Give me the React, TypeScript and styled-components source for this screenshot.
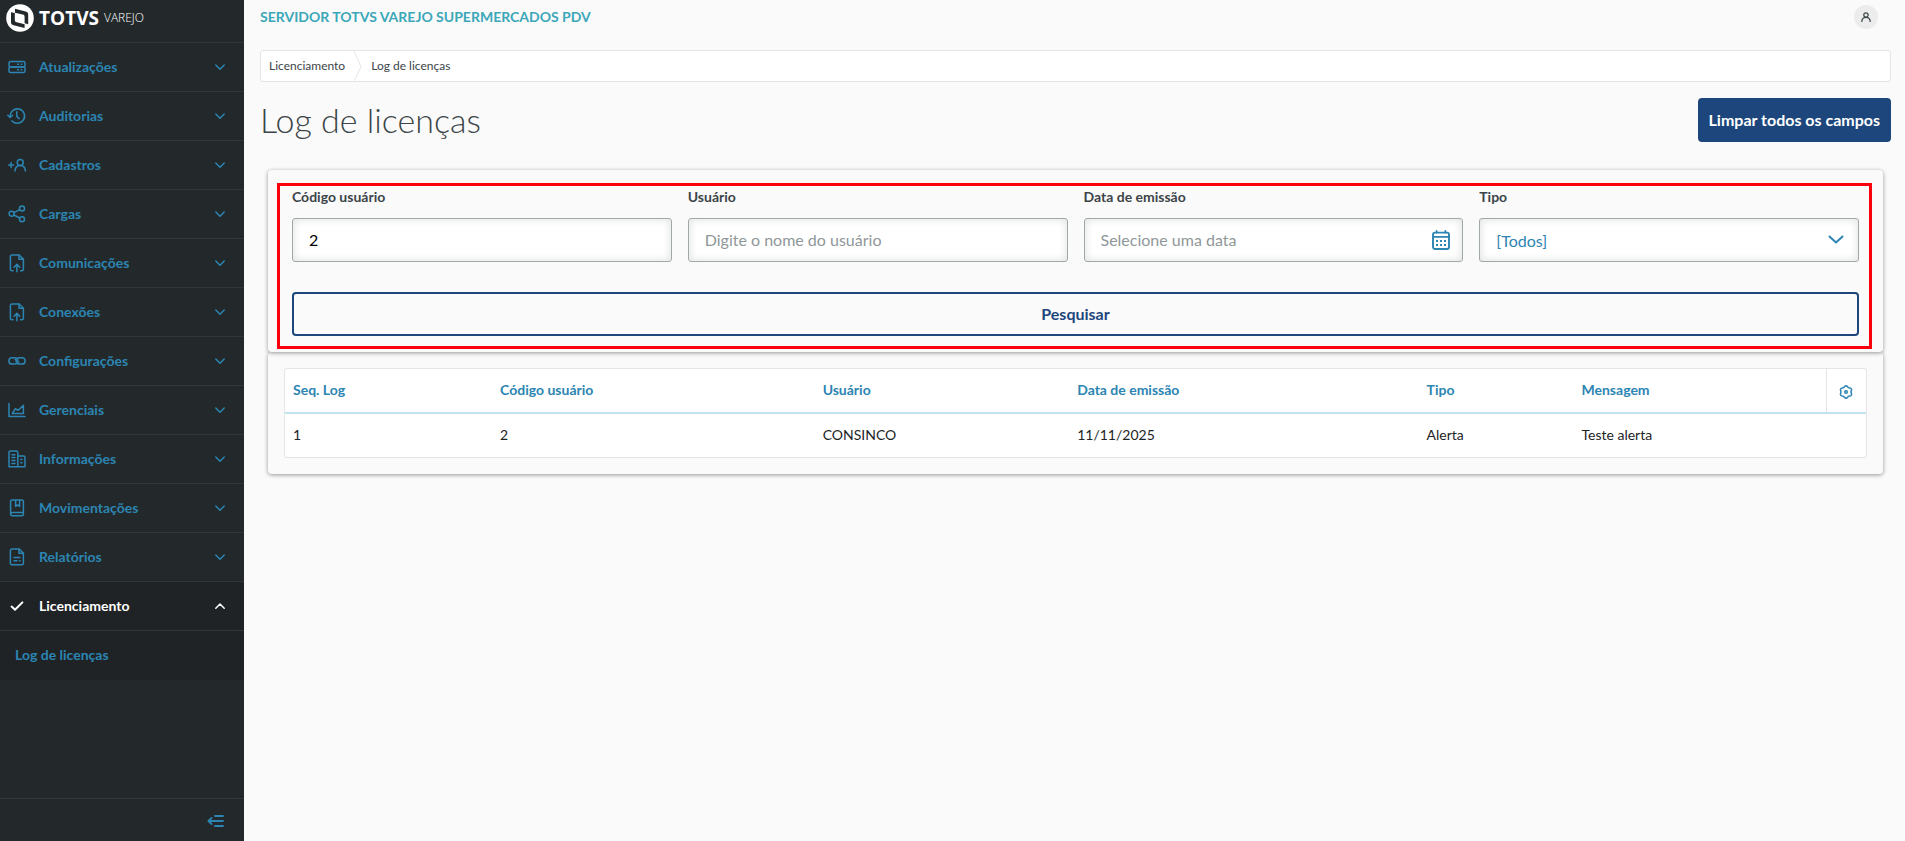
import React from 'react';
import styled, { createGlobalStyle } from 'styled-components';

const blue = '#2c85b2';
const navy = '#1c467c';
const line = '#e3e5e6';

const GlobalStyle = createGlobalStyle`
  *, *::before, *::after { box-sizing: border-box; }
  body {
    margin: 0;
    background: #fafafa;
    color: #1d2426;
    font-family: Lato, "Open Sans", sans-serif;
    font-size: 14px;
  }
  button, input, select { font-family: inherit; margin: 0; }
`;

const Layout = styled.div`
  display: flex;
  min-height: 100vh;
`;

/* Sidebar */
const Sidebar = styled.aside`
  display: flex;
  flex-direction: column;
  flex: 0 0 244px;
  background: #23292b;
`;

const Brand = styled.a`
  display: flex;
  align-items: center;
  height: 43px;
  padding: 0 0 7px 6px;
  border-bottom: 1px solid #2f373b;
  color: #fff;
  text-decoration: none;
  font-family: "Open Sans", sans-serif;
`;

const BrandName = styled.strong`
  margin-left: 5px;
  font-size: 19px;
  line-height: 28px;
`;

const BrandProduct = styled.span`
  margin-left: 5px;
  font-size: 12px;
  font-weight: 300;
  line-height: 28px;
`;

const Menu = styled.ul`
  flex: 1;
  margin: 0;
  padding: 0;
  list-style: none;
`;

const MenuButton = styled.button<{ $active?: boolean }>`
  display: flex;
  align-items: center;
  width: 100%;
  height: 49px;
  padding: 0 19px 0 8px;
  border: 0;
  border-bottom: 1px solid #2f373b;
  background: ${(p) => (p.$active ? '#1f2325' : 'transparent')};
  color: ${(p) => (p.$active ? '#fff' : blue)};
  font-size: 14px;
  font-weight: 700;
  text-align: left;
  cursor: pointer;
`;

const MenuLabel = styled.span`
  flex: 1;
  margin-left: 13px;
  padding-bottom: 2px;
`;

const SubMenu = styled.ul`
  margin: 0;
  padding: 0;
  list-style: none;
  background: #1f2325;
`;

const SubMenuLink = styled.a`
  display: block;
  padding: 0 0 2px 15px;
  color: ${blue};
  font-weight: 700;
  line-height: 47px;
  text-decoration: none;
`;

const SidebarFooter = styled.div`
  display: flex;
  align-items: center;
  justify-content: flex-end;
  height: 43px;
  padding: 2px 20px 0 0;
  border-top: 1px solid #2f373b;
`;

const IconButton = styled.button`
  display: inline-flex;
  align-items: center;
  justify-content: center;
  padding: 0;
  border: 0;
  background: transparent;
  color: ${blue};
  vertical-align: middle;
  cursor: pointer;
`;

/* Content */
const Content = styled.main`
  flex: 1;
  min-width: 0;
  padding: 0 14px 24px 16px;
`;

const TopBar = styled.header`
  display: flex;
  align-items: center;
  justify-content: space-between;
  height: 34px;
  padding-right: 13px;
`;

const SystemName = styled.span`
  padding-bottom: 2px;
  color: #3ba7b9;
  font-size: 14px;
  font-weight: 700;
`;

const Avatar = styled(IconButton)`
  width: 24px;
  height: 24px;
  border-radius: 50%;
  background: #ececec;
  color: #3c4548;
`;

const Breadcrumb = styled.nav`
  display: flex;
  align-items: center;
  height: 32px;
  margin-top: 16px;
  padding-left: 8px;
  border: 1px solid ${line};
  border-radius: 3px;
  background: #fff;
`;

const Crumb = styled.a`
  padding-bottom: 2px;
  color: #3c4548;
  font-size: 12px;
  text-decoration: none;
`;

const CrumbArrow = styled.svg`
  margin: 0 9px;
`;

const TitleRow = styled.div`
  display: flex;
  align-items: center;
  justify-content: space-between;
  margin-top: 16px;
`;

const Title = styled.h1`
  margin: 0;
  color: #3c4548;
  font-size: 34px;
  font-weight: 300;
  line-height: 44px;
`;

const Button = styled.button<{ $primary?: boolean }>`
  height: 44px;
  padding: 0 9px 2px;
  border: 2px solid ${navy};
  border-radius: 4px;
  background: ${(p) => (p.$primary ? navy : 'transparent')};
  color: ${(p) => (p.$primary ? '#fff' : navy)};
  font-size: 16px;
  font-weight: 700;
  cursor: pointer;
`;

const Card = styled.section`
  position: relative;
  margin: 0 8px;
  border-radius: 4px;
  background: #fafafa;
  box-shadow: 0 1px 4px rgba(0, 0, 0, 0.4);
`;

const FilterCard = styled(Card)`
  z-index: 1;
  margin-top: 28px;
  padding: 17px 24px 16px;
`;

const ResultCard = styled(Card)`
  padding: 16px;
`;

const Highlight = styled.div`
  position: absolute;
  inset: 13px 11px 3px 9px;
  border: 3px solid #fa000d;
  pointer-events: none;
`;

const Form = styled.form`
  display: grid;
  grid-template-columns: repeat(4, minmax(0, 1fr));
  gap: 30px 16px;

  ${Button} { grid-column: 1 / -1; }
`;

const Field = styled.div`
  display: flex;
  flex-direction: column;
  gap: 11px;
`;

const Label = styled.label`
  color: #3c4548;
  font-weight: 700;
  line-height: 20px;
`;

const Control = styled.div`
  display: flex;
  align-items: center;
  height: 44px;
  padding-right: 12px;
  border: 1px solid #a1a9aa;
  border-radius: 3px;
  background: #fff;
  box-shadow: inset 0 0 8px rgba(0, 0, 0, 0.14);
  color: ${blue};
`;

const Input = styled.input`
  flex: 1;
  min-width: 0;
  height: 42px;
  padding: 0 16px 2px;
  border: 0;
  outline: 0;
  background: transparent;
  color: #000;
  font-size: 16px;

  &::placeholder { color: #8f9799; opacity: 1; }
`;

const Select = styled.select`
  flex: 1;
  min-width: 0;
  height: 42px;
  padding: 0 16px;
  border: 0;
  outline: 0;
  appearance: none;
  background: transparent;
  color: ${blue};
  font-size: 16px;
`;

const TableFrame = styled.div`
  border: 1px solid ${line};
  border-radius: 3px;
  background: #fff;
`;

const Table = styled.table`
  width: 100%;
  border-collapse: collapse;
  table-layout: fixed;
`;

const Col = styled.col<{ $width: string }>`
  width: ${(p) => p.$width};
`;

const HeadCell = styled.th`
  height: 44px;
  padding: 0 8px 2px;
  border-bottom: 2px solid #c2e2ec;
  color: ${blue};
  font-weight: 700;
  text-align: left;
`;

const SettingsCell = styled(HeadCell)`
  padding: 0;
  border-left: 1px solid ${line};
  text-align: center;
`;

const Cell = styled.td`
  height: 44px;
  padding: 0 8px 2px;
`;

const Stroke = styled.svg`
  display: block;
  flex: none;
  fill: none;
  stroke: currentColor;
  stroke-width: 1.5;
  stroke-linecap: round;
  stroke-linejoin: round;
`;

const icons: Record<string, React.ReactNode> = {
  server: (
    <>
      <rect x="1" y="3.4" width="16" height="5.6" rx="1.6" />
      <rect x="1" y="9" width="16" height="5.6" rx="1.6" />
      <path d="M9.5 6.2h1M13.2 6.2h.6M9.5 11.8h1M13.2 11.8h.6" />
    </>
  ),
  history: (
    <>
      <path d="M2.2 9.8A7.2 7.2 0 1 1 4 13.9" />
      <path d="M-.2 8.2l2.3 2.2 2.4-2.2M8.8 4.8v4.6l2.4 2.2" />
    </>
  ),
  user: (
    <>
      <path d="M.6 9h5M3.1 6.5v5" />
      <circle cx="12.2" cy="6.4" r="3" />
      <path d="M7 15c.2-3.6 2.4-5.6 5.2-5.6s5 2 5.2 5.6" />
    </>
  ),
  share: (
    <>
      <circle cx="3.6" cy="8.8" r="2.5" />
      <circle cx="14" cy="3.4" r="2.5" />
      <circle cx="14" cy="14.2" r="2.5" />
      <path d="M5.9 7.6l5.8-3M5.9 10l5.8 3" />
    </>
  ),
  fileUp: (
    <>
      <path d="M5 16.8H4a1.6 1.6 0 0 1-1.6-1.6V2.6A1.6 1.6 0 0 1 4 1h7.2l4.2 4.2v10a1.6 1.6 0 0 1-1.6 1.6h-1.2" />
      <path d="M11 1.2v4h4.2M8.9 17.8v-7M6 13.2l2.9-2.8 2.9 2.8" />
    </>
  ),
  link: (
    <>
      <path d="M8.6 11.2a3.2 3.2 0 0 1-2 .9H4.1a3.2 3.2 0 0 1 0-6.4h2.5a3.2 3.2 0 0 1 3.2 3.2c0 .6.4 1.3 1 1.3" />
      <path d="M9.4 6.6a3.2 3.2 0 0 1 2-.9h2.5a3.2 3.2 0 0 1 0 6.4h-2.5a3.2 3.2 0 0 1-3.2-3.2c0-.6-.4-1.3-1-1.3" />
    </>
  ),
  chart: (
    <>
      <path d="M1 2.4v13.2h16" />
      <path d="M4.4 12.4l2.8-4.6 3 1.4 5.2-4.8v8z" />
    </>
  ),
  building: (
    <>
      <path d="M1 16.8V2.4C1 1.6 1.6 1 2.4 1h6c.8 0 1.4.6 1.4 1.4v14.4zM9.8 6h5.8c.8 0 1.4.6 1.4 1.4v9.4H9.8" />
      <path d="M4 4.8h3M4 7.6h3M4 10.4h3M4 13.4h3M12.8 9.4h1.2M12.8 12.8h1.2" />
    </>
  ),
  book: (
    <>
      <path d="M2.6 15V2.6C2.6 1.6 3.4 1 4.2 1h9.6c.9 0 1.6.7 1.6 1.6v12.6c0 .9-.7 1.6-1.6 1.6H4.2c-.9 0-1.6-.7-1.6-1.6s.7-1.8 1.6-1.8h11" />
      <path d="M7.6 1.2v6.2l2-1.6 2 1.6V1.2" />
    </>
  ),
  file: (
    <>
      <path d="M4 16.8a1.6 1.6 0 0 1-1.6-1.6V2.6A1.6 1.6 0 0 1 4 1h7.2l4.2 4.2v10a1.6 1.6 0 0 1-1.6 1.6z" />
      <path d="M11 1.2v4h4.2M6 9.4h5.8M6 12.8h3M11.6 12.8h.4" />
    </>
  ),
  check: <path d="M3.6 9.6l3.4 3.2 7.4-7.4" strokeWidth="2" />,
};

const Icon = ({ name }: { name: string }) => (
  <Stroke width="18" height="18" viewBox="0 0 18 18" overflow="visible" aria-hidden="true">
    {icons[name]}
  </Stroke>
);

const Chevron = ({ up }: { up?: boolean }) => (
  <Stroke width="10" height="6" viewBox="0 0 10 6" overflow="visible" aria-hidden="true">
    <path d={up ? 'M.8 5.2L5 1l4.2 4.2' : 'M.8 1L5 5.2 9.2 1'} />
  </Stroke>
);

/* Outline of a gear with six rounded teeth around (7, 7) */
const gearPoints = Array.from({ length: 60 }, (_, i) => {
  const angle = (i / 60) * Math.PI * 2;
  const radius = 5.6 + 0.6 * Math.cos(6 * angle);
  return `${(7 + radius * Math.sin(angle)).toFixed(2)},${(7 - radius * Math.cos(angle)).toFixed(2)}`;
}).join(' ');

const Logo = () => (
  <svg width="28" height="28" viewBox="0 0 28 28" aria-hidden="true">
    <circle cx="14" cy="14" r="13.8" fill="#fff" />
    <path d="M9 4.8l10.600 2.600c1.800.5 2.600 1.400 2.600 3v9.800l-3.600-.9v-6.400c0-1.300-.6-2-1.900-2.300L9 8.700z" fill="#23292b" />
    <path d="M5 8.200l3.800.9v6.800c0 1.300.6 2 1.900 2.300l7.900 2v3.800L7.600 21.300C5.800 20.800 5 19.900 5 18.300z" fill="#23292b" />
  </svg>
);

const menu: [string, string][] = [
  ['server', 'Atualizações'],
  ['history', 'Auditorias'],
  ['user', 'Cadastros'],
  ['share', 'Cargas'],
  ['fileUp', 'Comunicações'],
  ['fileUp', 'Conexões'],
  ['link', 'Configurações'],
  ['chart', 'Gerenciais'],
  ['building', 'Informações'],
  ['book', 'Movimentações'],
  ['file', 'Relatórios'],
];

const columns: [string, string][] = [
  ['Seq. Log', '13.1%'],
  ['Código usuário', '20.4%'],
  ['Usuário', '16.1%'],
  ['Data de emissão', '22.1%'],
  ['Tipo', '9.8%'],
  ['Mensagem', 'auto'],
];

const rows = [['1', '2', 'CONSINCO', '11/11/2025', 'Alerta', 'Teste alerta']];

export default function App() {
  return (
    <Layout>
      <GlobalStyle />
      <Sidebar>
        <Brand href="#">
          <Logo />
          <BrandName>TOTVS</BrandName>
          <BrandProduct>VAREJO</BrandProduct>
        </Brand>
        <Menu>
          {menu.map(([icon, label]) => (
            <li key={label}>
              <MenuButton type="button">
                <Icon name={icon} />
                <MenuLabel>{label}</MenuLabel>
                <Chevron />
              </MenuButton>
            </li>
          ))}
          <li>
            <MenuButton type="button" $active aria-expanded="true">
              <Icon name="check" />
              <MenuLabel>Licenciamento</MenuLabel>
              <Chevron up />
            </MenuButton>
            <SubMenu>
              <li>
                <SubMenuLink href="#">Log de licenças</SubMenuLink>
              </li>
            </SubMenu>
          </li>
        </Menu>
        <SidebarFooter>
          <IconButton type="button" aria-label="Recolher menu">
            <Stroke width="17" height="14" viewBox="0 0 17 14" aria-hidden="true">
              <path d="M8 2h8M1.4 7H16M8 12h8M4.6 4L1.4 7l3.2 3" strokeWidth="1.8" />
            </Stroke>
          </IconButton>
        </SidebarFooter>
      </Sidebar>

      <Content>
        <TopBar>
          <SystemName>SERVIDOR TOTVS VAREJO SUPERMERCADOS PDV</SystemName>
          <Avatar type="button" aria-label="Perfil">
            <Stroke width="10" height="10" viewBox="0 0 10 10" aria-hidden="true">
              <circle cx="5" cy="3" r="2.2" strokeWidth="1.2" />
              <path d="M.8 9.4C1 6.8 2.6 5.400 5 5.400s4 1.400 4.200 4" strokeWidth="1.2" />
            </Stroke>
          </Avatar>
        </TopBar>

        <Breadcrumb aria-label="Navegação">
          <Crumb href="#">Licenciamento</Crumb>
          <CrumbArrow width="8" height="30" viewBox="0 0 8 30" aria-hidden="true">
            <path d="M0 0l7 16-7 14" fill="none" stroke={line} />
          </CrumbArrow>
          <Crumb href="#" aria-current="page">Log de licenças</Crumb>
        </Breadcrumb>

        <TitleRow>
          <Title>Log de licenças</Title>
          <Button type="button" $primary>Limpar todos os campos</Button>
        </TitleRow>

        <FilterCard>
          <Form onSubmit={(e) => e.preventDefault()}>
            <Field>
              <Label htmlFor="codigo">Código usuário</Label>
              <Control>
                <Input id="codigo" defaultValue="2" />
              </Control>
            </Field>
            <Field>
              <Label htmlFor="usuario">Usuário</Label>
              <Control>
                <Input id="usuario" placeholder="Digite o nome do usuário" />
              </Control>
            </Field>
            <Field>
              <Label htmlFor="data">Data de emissão</Label>
              <Control>
                <Input id="data" placeholder="Selecione uma data" />
                <IconButton type="button" aria-label="Abrir calendário">
                  <Stroke width="18" height="20" viewBox="0 0 18 20" aria-hidden="true">
                    <rect x="1" y="2.6" width="16" height="16.4" rx="2" strokeWidth="1.9" />
                    <path d="M1.500 6.8h15M4.600.9v1.600M13.400.9v1.600" strokeWidth="1.8" />
                    <path
                      d="M4 11h2M8 11h2M12 11h2M4 15h2M8 15h2M12 15h2"
                      strokeWidth="2"
                      strokeLinecap="butt"
                    />
                  </Stroke>
                </IconButton>
              </Control>
            </Field>
            <Field>
              <Label htmlFor="tipo">Tipo</Label>
              <Control>
                <Select id="tipo">
                  <option>[Todos]</option>
                </Select>
                <Stroke width="20" height="10" viewBox="0 0 20 10" aria-hidden="true">
                  <path d="M3.500 1.500l6.500 6 6.500-6" strokeWidth="2" />
                </Stroke>
              </Control>
            </Field>
            <Button type="submit">Pesquisar</Button>
          </Form>
          <Highlight />
        </FilterCard>

        <ResultCard>
          <TableFrame>
            <Table>
              <colgroup>
                {columns.map(([name, width]) => (
                  <Col key={name} $width={width} />
                ))}
                <Col $width="40px" />
              </colgroup>
              <thead>
                <tr>
                  {columns.map(([name]) => (
                    <HeadCell key={name} scope="col">{name}</HeadCell>
                  ))}
                  <SettingsCell>
                    <IconButton type="button" aria-label="Configurar colunas">
                      <Stroke width="14" height="14" viewBox="0 0 14 14" aria-hidden="true">
                        <polygon points={gearPoints} />
                        <circle cx="7" cy="7" r="1.3" />
                      </Stroke>
                    </IconButton>
                  </SettingsCell>
                </tr>
              </thead>
              <tbody>
                {rows.map((row) => (
                  <tr key={row[0]}>
                    {row.map((value, i) => (
                      <Cell key={columns[i][0]}>{value}</Cell>
                    ))}
                    <Cell />
                  </tr>
                ))}
              </tbody>
            </Table>
          </TableFrame>
        </ResultCard>
      </Content>
    </Layout>
  );
}
